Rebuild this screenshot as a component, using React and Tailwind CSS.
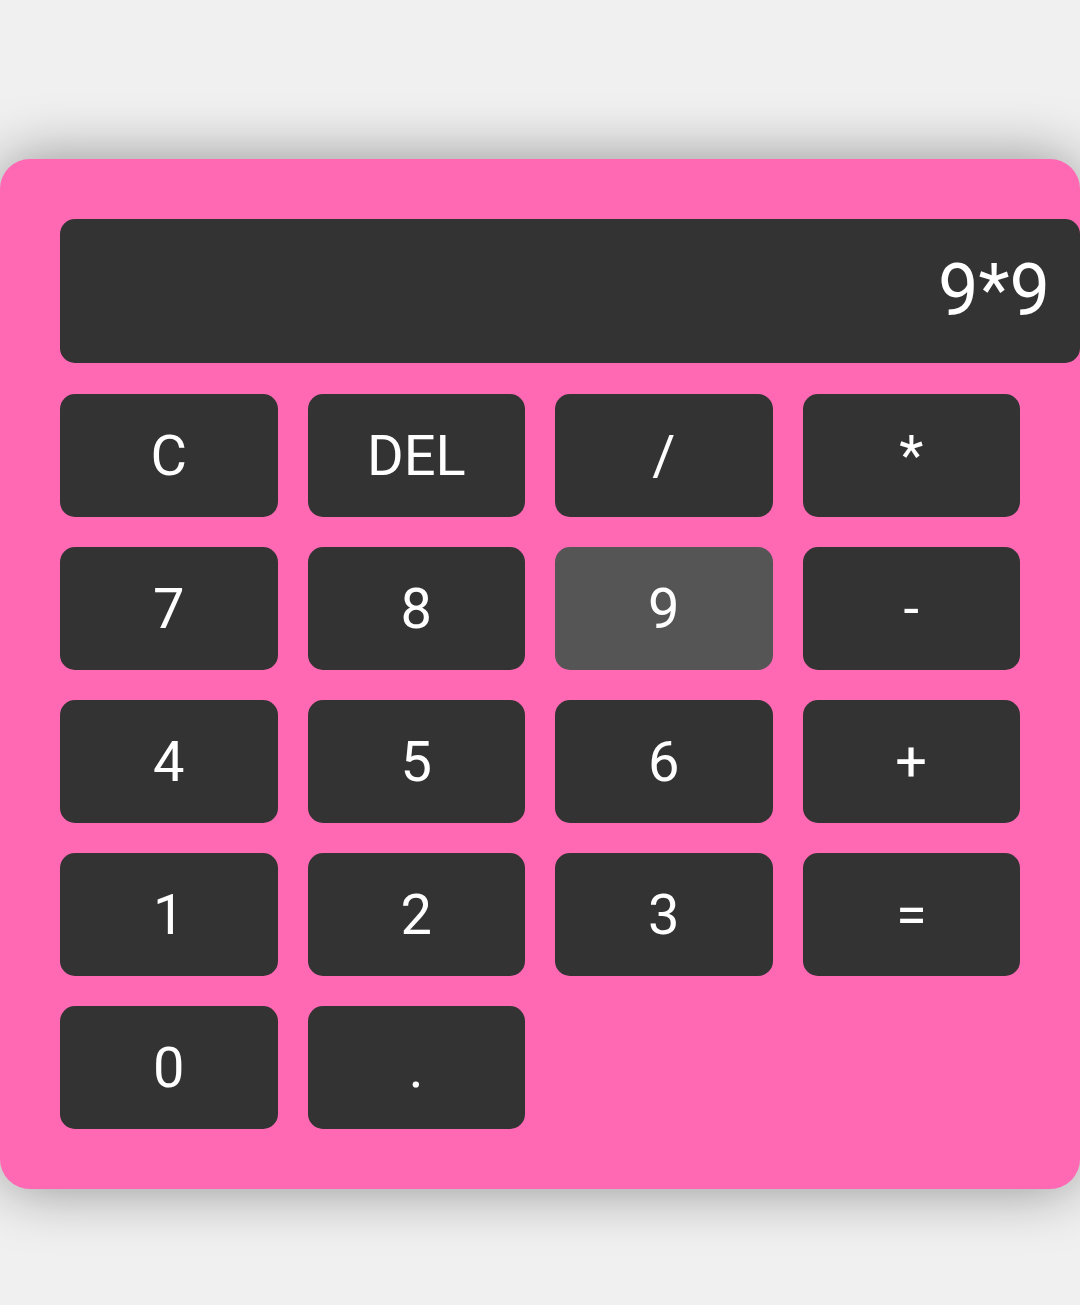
const keys = [
  'C', 'DEL', '/', '*',
  '7', '8', '9', '-',
  '4', '5', '6', '+',
  '1', '2', '3', '=',
  '0', '.',
];

export default function App() {
  return (
    <div className="min-h-[1305px] bg-[#f0f0f0] pt-[159px] font-['Roboto',sans-serif] overflow-hidden">
      <div className="w-[1080px] bg-[#ff69b4] rounded-[30px] p-[60px] shadow-[0_0_60px_rgba(0,0,0,0.4)]">
        {/* display */}
        <div className="w-[1020px] h-[144px] bg-[#333] rounded-[15px] flex items-center justify-end pr-[30px] text-white text-[72px] leading-none mb-[31px]">
          9*9
        </div>

        {/* keypad */}
        <div className="grid grid-cols-4 gap-[30px]">
          {keys.map((k) => (
            <button
              key={k}
              className={
                'h-[123px] rounded-[15px] text-white text-[56px] leading-none flex items-center justify-center ' +
                (k === '9' ? 'bg-[#555]' : 'bg-[#333]')
              }
            >
              {k}
            </button>
          ))}
        </div>
      </div>
    </div>
  );
}
